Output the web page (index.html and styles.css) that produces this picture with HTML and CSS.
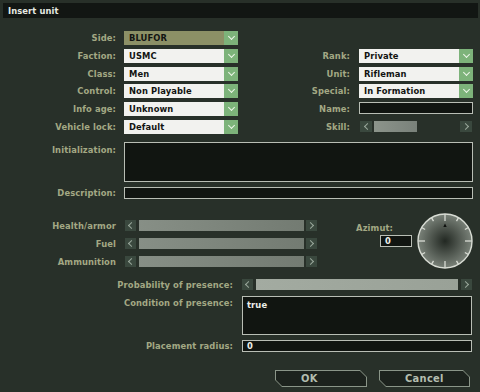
FILE: index.html
```html
<!DOCTYPE html>
<html>
<head>
  <title>Insert unit</title>
  <link rel="stylesheet" href="styles.css">
</head>
<body>
  <div class="titlebar">Insert unit</div>

  <div class="top-grid">
    <div class="lbl">Side:</div>
    <div class="combo combo-side"><span>BLUFOR</span><i class="arrow"></i></div>
    <div></div><div></div>

    <div class="lbl">Faction:</div>
    <div class="combo"><span>USMC</span><i class="arrow"></i></div>
    <div class="lbl r">Rank:</div>
    <div class="combo"><span>Private</span><i class="arrow"></i></div>

    <div class="lbl">Class:</div>
    <div class="combo"><span>Men</span><i class="arrow"></i></div>
    <div class="lbl r">Unit:</div>
    <div class="combo"><span>Rifleman</span><i class="arrow"></i></div>

    <div class="lbl">Control:</div>
    <div class="combo"><span>Non Playable</span><i class="arrow"></i></div>
    <div class="lbl r">Special:</div>
    <div class="combo"><span>In Formation</span><i class="arrow"></i></div>

    <div class="lbl">Info age:</div>
    <div class="combo"><span>Unknown</span><i class="arrow"></i></div>
    <div class="lbl r">Name:</div>
    <div class="edit name-edit"></div>

    <div class="lbl">Vehicle lock:</div>
    <div class="combo"><span>Default</span><i class="arrow"></i></div>
    <div class="lbl r">Skill:</div>
    <div class="slider skill">
      <i class="sl-btn left"></i>
      <div class="track"><div class="thumb skill-thumb"></div></div>
      <i class="sl-btn right"></i>
    </div>
  </div>

  <div class="text-fields">
    <div class="lbl top">Initialization:</div>
    <div class="edit init-edit"></div>
    <div class="lbl">Description:</div>
    <div class="edit desc-edit"></div>
  </div>

  <div class="lower">
    <div class="sliders">
      <div class="lbl">Health/armor</div>
      <div class="slider bar"><i class="sl-btn left"></i><div class="track"><div class="thumb full"></div></div><i class="sl-btn right"></i></div>
      <div class="lbl">Fuel</div>
      <div class="slider bar"><i class="sl-btn left"></i><div class="track"><div class="thumb full"></div></div><i class="sl-btn right"></i></div>
      <div class="lbl">Ammunition</div>
      <div class="slider bar"><i class="sl-btn left"></i><div class="track"><div class="thumb full"></div></div><i class="sl-btn right"></i></div>
    </div>

    <div class="azimut">
      <div class="lbl">Azimut:</div>
      <div class="edit azimut-edit">0</div>
    </div>

    <svg class="dial" viewBox="0 0 56 56" width="56" height="56">
      <defs>
        <radialGradient id="dialFill" cx="50%" cy="50%" r="50%">
          <stop offset="0%" stop-color="#222822"/>
          <stop offset="100%" stop-color="#7a8279"/>
        </radialGradient>
      </defs>
      <circle cx="28" cy="28" r="27" fill="url(#dialFill)" stroke="#d8dcd4" stroke-width="1.4"/>
      <g stroke="#d8dcd4" stroke-width="1.3">
        <line x1="28" y1="1" x2="28" y2="8"/>
        <line x1="28" y1="1" x2="28" y2="8" transform="rotate(90 28 28)"/>
        <line x1="28" y1="1" x2="28" y2="8" transform="rotate(180 28 28)"/>
        <line x1="28" y1="1" x2="28" y2="8" transform="rotate(270 28 28)"/>
        <line x1="28" y1="1" x2="28" y2="5" transform="rotate(30 28 28)"/>
        <line x1="28" y1="1" x2="28" y2="5" transform="rotate(60 28 28)"/>
        <line x1="28" y1="1" x2="28" y2="5" transform="rotate(120 28 28)"/>
        <line x1="28" y1="1" x2="28" y2="5" transform="rotate(150 28 28)"/>
        <line x1="28" y1="1" x2="28" y2="5" transform="rotate(210 28 28)"/>
        <line x1="28" y1="1" x2="28" y2="5" transform="rotate(240 28 28)"/>
        <line x1="28" y1="1" x2="28" y2="5" transform="rotate(300 28 28)"/>
        <line x1="28" y1="1" x2="28" y2="5" transform="rotate(330 28 28)"/>
      </g>
      <polygon points="28,10.5 26.3,14 29.7,14" fill="#0e110e"/>
    </svg>
  </div>

  <div class="presence">
    <div class="lbl">Probability of presence:</div>
    <div class="slider prob"><i class="sl-btn left"></i><div class="track"><div class="thumb full light"></div></div><i class="sl-btn right"></i></div>
    <div class="lbl top">Condition of presence:</div>
    <div class="edit cond-edit">true</div>
    <div class="lbl">Placement radius:</div>
    <div class="edit radius-edit">0</div>
  </div>

  <div class="buttons">
    <div class="btn ok"><div class="btn-face">OK</div></div>
    <div class="btn cancel"><div class="btn-face">Cancel</div></div>
  </div>
</body>
</html>
```

FILE: styles.css
```css
* {
  box-sizing: border-box;
}

body {
  margin: 0;
  width: 480px;
  height: 392px;
  overflow: hidden;
  background: #283029;
  font-family: "DejaVu Sans Condensed", "DejaVu Sans", sans-serif;
  font-weight: bold;
  font-size: 9.3px;
  letter-spacing: 0.1px;
  color: #a3a884;
}

.titlebar {
  margin: 3px 2px 0 3px;
  height: 15px;
  line-height: 15px;
  padding-left: 5px;
  background: #121613;
  color: #e6eae2;
}

.lbl {
  text-align: right;
  padding-right: 8px;
  line-height: 14px;
  white-space: nowrap;
}
.lbl.r {
  padding-right: 9px;
}
.lbl.top {
  line-height: 13px;
  align-self: start;
}

/* combo boxes */
.top-grid {
  display: grid;
  grid-template-columns: 124px 114px 121px 114px;
  grid-auto-rows: 14px;
  row-gap: 3.8px;
  margin-top: 13px;
}
.combo {
  display: flex;
  background: #f2f2ef;
  color: #121412;
}
.combo span {
  flex: 1;
  padding-left: 5px;
  line-height: 14px;
}
.combo-side {
  background: #8c9066;
}
.combo .arrow {
  width: 14px;
  background: #7db37a;
  display: flex;
  align-items: center;
  justify-content: center;
}
.combo .arrow::after {
  content: "";
  width: 4px;
  height: 4px;
  margin-top: -3px;
  border-right: 1.5px solid #eef6ea;
  border-bottom: 1.5px solid #eef6ea;
  transform: rotate(45deg);
}

/* edit boxes */
.edit {
  background: #111511;
  border: 1px solid #b9beb5;
  color: #eceee8;
  padding-left: 4px;
  line-height: 10px;
}
.name-edit {
  height: 12px;
  align-self: start;
}

/* sliders */
.slider {
  display: flex;
  gap: 2px;
  height: 11px;
}
.slider.skill {
  align-self: center;
  margin-left: 1px;
  width: 112px;
}
.sl-btn {
  width: 12px;
  background: #3a483e;
  display: flex;
  align-items: center;
  justify-content: center;
}
.sl-btn::after {
  content: "";
  width: 4px;
  height: 4px;
  border-right: 1.3px solid #9aa89c;
  border-bottom: 1.3px solid #9aa89c;
}
.sl-btn.left::after {
  margin-left: 2px;
  transform: rotate(135deg);
}
.sl-btn.right::after {
  margin-right: 2px;
  transform: rotate(-45deg);
}
.track {
  flex: 1;
  display: flex;
}
.thumb {
  background: linear-gradient(to right, #878f86, #737b72);
}
.skill-thumb {
  width: 43px;
  background: linear-gradient(to right, #8c948b, #79817a);
}
.thumb.full {
  flex: 1;
}
.thumb.light {
  background: linear-gradient(to right, #a3aba1, #99a197);
}

/* init / description */
.text-fields {
  display: grid;
  grid-template-columns: 124px 349px;
  grid-template-rows: 40px 12px;
  row-gap: 5px;
  margin-top: 8px;
}
.text-fields .lbl {
  line-height: 12px;
}
.text-fields .lbl.top {
  padding-top: 2px;
}

/* damage sliders, azimut */
.lower {
  display: flex;
  margin-top: 14px;
}
.sliders {
  display: grid;
  grid-template-columns: 125px 192px;
  grid-auto-rows: 11px;
  row-gap: 7px;
  padding-top: 7px;
}
.sliders .lbl {
  padding-right: 9px;
  line-height: 11px;
}
.slider.bar .sl-btn {
  width: 11px;
}
.slider.bar {
  gap: 2.5px;
}
.azimut {
  width: 95px;
  display: flex;
  flex-direction: column;
  align-items: flex-end;
  padding-top: 8px;
}
.azimut .lbl {
  padding-right: 19px;
  line-height: 13px;
  margin-bottom: 1px;
}
.azimut-edit {
  width: 32px;
  height: 12px;
}
.dial {
  margin-left: 5px;
  display: block;
}

/* presence */
.presence {
  display: grid;
  grid-template-columns: 242px 230px;
  grid-template-rows: 12px 39px 12px;
  row-gap: 5px;
  margin-top: 10px;
}
.presence .lbl {
  padding-right: 9px;
  line-height: 12px;
}
.presence .lbl.top {
  line-height: 13px;
}
.slider.prob {
  gap: 3px;
}
.slider.prob .sl-btn {
  width: 11px;
}
.cond-edit {
  padding-top: 3px;
}

/* buttons */
.buttons {
  display: flex;
  justify-content: flex-end;
  gap: 12px;
  padding-right: 10px;
  margin-top: 18px;
}
.btn {
  height: 17px;
  padding: 1px;
  background: #8a9588;
  clip-path: polygon(0 0, calc(100% - 7px) 0, 100% 7px, 100% 100%, 7px 100%, 0 calc(100% - 7px));
}
.btn.ok {
  width: 92px;
}
.btn.cancel {
  width: 91px;
}
.btn-face {
  height: 100%;
  background: #1c221d;
  clip-path: polygon(0 0, calc(100% - 6px) 0, 100% 6px, 100% 100%, 6px 100%, 0 calc(100% - 6px));
  color: #b3bdaf;
  font-size: 11px;
  line-height: 15px;
  padding-left: 25px;
  letter-spacing: 0.3px;
}
```
